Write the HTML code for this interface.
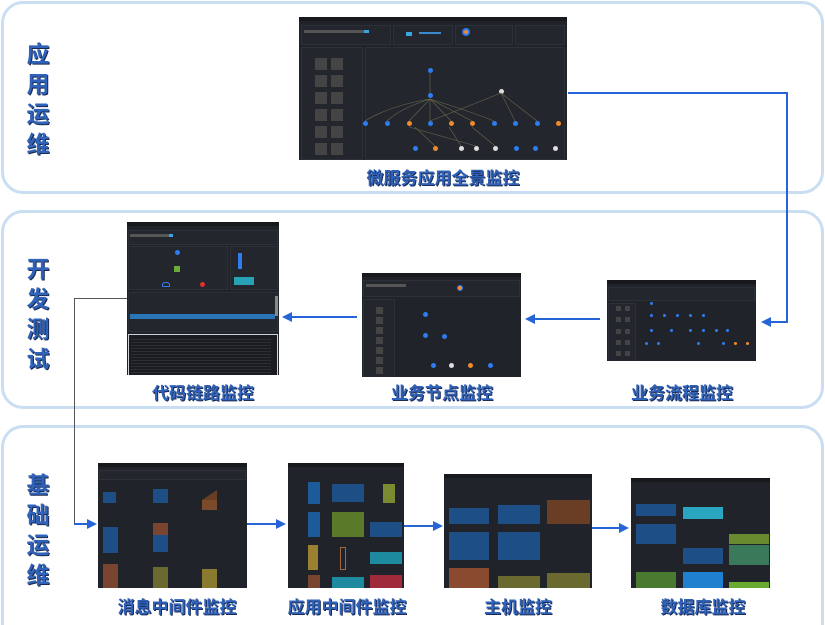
<!DOCTYPE html>
<html><head><meta charset="utf-8"><style>
*{margin:0;padding:0;box-sizing:border-box}
body{width:825px;height:625px;background:#fff;position:relative;overflow:hidden;font-family:"Liberation Sans","Noto Sans CJK SC",sans-serif}
.panel{position:absolute;border:3px solid #c9def2;border-radius:22px;background:#fff}
.vl{position:absolute;width:30px;font-size:23px;font-weight:bold;color:#2f62b8;line-height:30px;text-align:center;text-shadow:1px 1px 0 #1a2a50;font-family:"Noto Sans CJK SC",sans-serif}
.cap{position:absolute;font-size:17px;font-weight:bold;color:#2f62b8;text-shadow:1px 1px 0 #1b2b55;white-space:nowrap;transform:translateX(-50%);font-family:"Noto Sans CJK SC",sans-serif;line-height:20px}
.shot{position:absolute;background:#202329;overflow:hidden;border-top:4px solid #17191d}
.shot .p{position:absolute;border:1px solid #2c3038;background:#23262c}
.f{position:absolute}
.ln{position:absolute;background:#2565d8}
.ah{position:absolute;width:0;height:0;border-top:5px solid transparent;border-bottom:5px solid transparent}
.ahl{border-right:10px solid #2565d8}
.ahr{border-left:10px solid #2565d8}
.n{position:absolute;width:5px;height:5px;border-radius:50%;background:#2f7cf0}
.o{background:#f08a2c}.w{background:#ddd}
</style></head><body>

<div class="panel" style="left:1px;top:1px;width:823px;height:193px"></div>
<div class="panel" style="left:1px;top:210px;width:823px;height:199px"></div>
<div class="panel" style="left:1px;top:425px;width:823px;height:200px;border-bottom:none;border-radius:22px 22px 0 0"></div>

<div class="vl" style="left:23px;top:37px">应<br>用<br>运<br>维</div>
<div class="vl" style="left:23px;top:252px">开<br>发<br>测<br>试</div>
<div class="vl" style="left:23px;top:468px">基<br>础<br>运<br>维</div>

<div class="shot" style="left:299px;top:17px;width:268px;height:143px">
 <div class="p" style="left:2px;top:4px;width:90px;height:20px"></div>
 <div class="p" style="left:94px;top:4px;width:60px;height:20px"></div>
 <div class="p" style="left:156px;top:4px;width:58px;height:20px"></div>
 <div class="p" style="left:216px;top:4px;width:50px;height:20px"></div>
 <div class="f" style="left:5px;top:9px;width:60px;height:3px;background:#555"></div>
 <div class="f" style="left:65px;top:9px;width:5px;height:3px;background:#3aa6e0"></div>
 <div class="f" style="left:163px;top:7px;width:8px;height:8px;border-radius:50%;background:#f08a2c;border:2px solid #2f7cf0"></div>
 <div class="f" style="left:107px;top:11px;width:6px;height:4px;background:#3aa6e0"></div>
 <div class="f" style="left:120px;top:11px;width:22px;height:2px;background:#3a8ad0"></div>
 <div class="p" style="left:2px;top:26px;width:62px;height:113px"></div>
 <div class="p" style="left:66px;top:26px;width:200px;height:113px"></div>
 <div class="f" style="left:16px;top:37px;width:12px;height:12px;background:#444"></div><div class="f" style="left:32px;top:37px;width:12px;height:12px;background:#444"></div>
 <div class="f" style="left:16px;top:54px;width:12px;height:12px;background:#444"></div><div class="f" style="left:32px;top:54px;width:12px;height:12px;background:#444"></div>
 <div class="f" style="left:16px;top:71px;width:12px;height:12px;background:#444"></div><div class="f" style="left:32px;top:71px;width:12px;height:12px;background:#444"></div>
 <div class="f" style="left:16px;top:88px;width:12px;height:12px;background:#444"></div><div class="f" style="left:32px;top:88px;width:12px;height:12px;background:#444"></div>
 <div class="f" style="left:16px;top:105px;width:12px;height:12px;background:#444"></div><div class="f" style="left:32px;top:105px;width:12px;height:12px;background:#444"></div>
 <div class="f" style="left:16px;top:122px;width:12px;height:12px;background:#444"></div><div class="f" style="left:32px;top:122px;width:12px;height:12px;background:#444"></div>
 <div class="n" style="left:129px;top:47px"></div><div class="n" style="left:129px;top:72px"></div><div class="n w" style="left:200px;top:68px"></div>
 <div class="n" style="left:64px;top:100px"></div><div class="n" style="left:86px;top:100px"></div><div class="n o" style="left:108px;top:100px"></div><div class="n" style="left:129px;top:100px"></div><div class="n o" style="left:150px;top:100px"></div><div class="n o" style="left:171px;top:100px"></div><div class="n" style="left:193px;top:100px"></div><div class="n" style="left:214px;top:100px"></div><div class="n" style="left:236px;top:100px"></div><div class="n o" style="left:257px;top:100px"></div>
 <div class="n" style="left:114px;top:125px"></div><div class="n o" style="left:134px;top:125px"></div><div class="n w" style="left:160px;top:125px"></div><div class="n w" style="left:175px;top:125px"></div><div class="n w" style="left:194px;top:125px"></div><div class="n" style="left:215px;top:125px"></div><div class="n" style="left:234px;top:125px"></div><div class="n w" style="left:254px;top:125px"></div>
 <svg class="f" style="left:0;top:0" width="268" height="143"><g stroke="#6a6a50" stroke-width="0.6" fill="none"><path d="M131 52V72M131 78Q90 85 66 100M131 78Q100 88 88 100M131 78L110 100M131 78V100M131 78L152 100M131 78L173 100M131 78Q170 90 195 100M202 72Q170 85 131 100M202 72L216 100M202 72L238 100M116 106L136 125M150 106L162 125M173 106L196 125M110 106L177 125"/></g></svg>
</div>
<div class="cap" style="left:443px;top:167px">微服务应用全景监控</div>

<div class="shot" style="left:127px;top:222px;width:152px;height:153px">
 <div class="p" style="left:1px;top:4px;width:150px;height:15px"></div>
 <div class="f" style="left:3px;top:8px;width:40px;height:3px;background:#555"></div><div class="f" style="left:42px;top:8px;width:4px;height:3px;background:#3aa6e0"></div>
 <div class="p" style="left:1px;top:20px;width:100px;height:44px"></div>
 <div class="p" style="left:103px;top:20px;width:48px;height:44px"></div>
 <div class="f" style="left:111px;top:27px;width:4px;height:16px;background:#2f7cf0"></div>
 <div class="f" style="left:107px;top:51px;width:20px;height:8px;background:#27a3b5"></div>
 <div class="n" style="left:48px;top:24px"></div><div class="f" style="left:47px;top:40px;width:6px;height:6px;background:#6caa3a"></div>
 <div class="f" style="left:35px;top:56px;width:8px;height:5px;border:1px solid #2f7cf0;border-radius:50% 50% 0 0"></div><div class="n" style="left:73px;top:56px;background:#e03030"></div>
 <div class="p" style="left:1px;top:66px;width:150px;height:40px"></div>
 <div class="f" style="left:3px;top:88px;width:145px;height:5px;background:#2a8ad8;opacity:.8"></div>
 <div class="f" style="left:148px;top:70px;width:3px;height:20px;background:#888"></div>
 <div class="p" style="left:1px;top:108px;width:150px;height:45px;background:#1a1c20;border:1px solid #cfd3d8"></div>
 <div class="f" style="left:4px;top:113px;width:140px;height:38px;background:repeating-linear-gradient(#2b2e34 0 1px,#1a1c20 1px 3px)"></div>
</div>
<div class="cap" style="left:203px;top:382px">代码链路监控</div>

<div class="shot" style="left:362px;top:273px;width:159px;height:104px">
 <div class="p" style="left:1px;top:3px;width:157px;height:17px"></div>
 <div class="f" style="left:4px;top:7px;width:40px;height:3px;background:#555"></div><div class="f" style="left:95px;top:8px;width:6px;height:6px;border-radius:50%;background:#f08a2c;border:1px solid #2f7cf0"></div>
 <div class="p" style="left:1px;top:22px;width:32px;height:82px"></div>
 <div class="f" style="left:14px;top:30px;width:7px;height:7px;background:#444"></div><div class="f" style="left:14px;top:40px;width:7px;height:7px;background:#444"></div><div class="f" style="left:14px;top:50px;width:7px;height:7px;background:#444"></div><div class="f" style="left:14px;top:60px;width:7px;height:7px;background:#444"></div><div class="f" style="left:14px;top:70px;width:7px;height:7px;background:#444"></div><div class="f" style="left:14px;top:80px;width:7px;height:7px;background:#444"></div><div class="f" style="left:14px;top:90px;width:7px;height:7px;background:#444"></div>
 <div class="n" style="left:61px;top:35px"></div><div class="n" style="left:61px;top:56px"></div><div class="n" style="left:80px;top:57px"></div>
 <div class="n" style="left:69px;top:86px"></div><div class="n w" style="left:87px;top:86px"></div><div class="n o" style="left:106px;top:86px"></div><div class="n" style="left:126px;top:86px"></div>
</div>
<div class="cap" style="left:442px;top:382px">业务节点监控</div>

<div class="shot" style="left:607px;top:280px;width:149px;height:81px">
 <div class="p" style="left:1px;top:3px;width:147px;height:14px"></div>
 <div class="p" style="left:1px;top:19px;width:28px;height:62px"></div>
 <div class="f" style="left:9px;top:22px;width:5px;height:5px;background:#444"></div><div class="f" style="left:18px;top:22px;width:5px;height:5px;background:#444"></div>
 <div class="f" style="left:9px;top:33px;width:5px;height:5px;background:#444"></div><div class="f" style="left:18px;top:33px;width:5px;height:5px;background:#444"></div>
 <div class="f" style="left:9px;top:45px;width:5px;height:5px;background:#444"></div><div class="f" style="left:18px;top:45px;width:5px;height:5px;background:#444"></div>
 <div class="f" style="left:9px;top:56px;width:5px;height:5px;background:#444"></div><div class="f" style="left:18px;top:56px;width:5px;height:5px;background:#444"></div>
 <div class="f" style="left:9px;top:67px;width:5px;height:5px;background:#444"></div><div class="f" style="left:18px;top:67px;width:5px;height:5px;background:#444"></div>
 <div class="n" style="left:43px;top:18px;width:3px;height:3px"></div><div class="n" style="left:43px;top:30px;width:3px;height:3px"></div><div class="n" style="left:56px;top:30px;width:3px;height:3px"></div><div class="n" style="left:69px;top:30px;width:3px;height:3px"></div><div class="n" style="left:82px;top:30px;width:3px;height:3px"></div><div class="n" style="left:95px;top:30px;width:3px;height:3px"></div>
 <div class="n" style="left:43px;top:45px;width:3px;height:3px"></div><div class="n" style="left:63px;top:45px;width:3px;height:3px"></div><div class="n" style="left:82px;top:45px;width:3px;height:3px"></div><div class="n" style="left:95px;top:45px;width:3px;height:3px"></div><div class="n" style="left:108px;top:45px;width:3px;height:3px"></div><div class="n" style="left:119px;top:45px;width:3px;height:3px"></div>
 <div class="n" style="left:38px;top:58px;width:3px;height:3px"></div><div class="n" style="left:50px;top:58px;width:3px;height:3px"></div><div class="n" style="left:90px;top:58px;width:3px;height:3px"></div><div class="n" style="left:115px;top:58px;width:3px;height:3px"></div><div class="n o" style="left:127px;top:58px;width:3px;height:3px"></div><div class="n o" style="left:139px;top:58px;width:3px;height:3px"></div>
 <div class="f" style="left:33px;top:78px;width:114px;height:2px;background:#ccc"></div>
</div>
<div class="cap" style="left:682px;top:382px">业务流程监控</div>

<div class="shot" style="left:98px;top:463px;width:149px;height:125px">
 <div class="p" style="left:1px;top:3px;width:147px;height:10px"></div>
 <div class="f" style="left:5px;top:25px;width:13px;height:11px;background:#1d4f86"></div>
 <div class="f" style="left:55px;top:22px;width:15px;height:14px;background:#1d4f86"></div>
 <div class="f" style="left:104px;top:33px;width:15px;height:10px;background:#7a4a2a"></div><div class="f" style="left:104px;top:23px;width:15px;height:10px;background:#6a3e24;clip-path:polygon(0 100%,100% 0,100% 100%)"></div>
 <div class="f" style="left:5px;top:60px;width:15px;height:26px;background:#1d4f86"></div>
 <div class="f" style="left:55px;top:56px;width:15px;height:12px;background:#7a4530"></div><div class="f" style="left:55px;top:68px;width:15px;height:17px;background:#1d4f86"></div>
 <div class="f" style="left:5px;top:97px;width:15px;height:25px;background:#7a4530"></div>
 <div class="f" style="left:55px;top:100px;width:15px;height:22px;background:#6a6a30"></div>
 <div class="f" style="left:104px;top:102px;width:15px;height:20px;background:#8a7a30"></div>
</div>
<div class="cap" style="left:177px;top:596px">消息中间件监控</div>

<div class="shot" style="left:288px;top:463px;width:116px;height:125px">
 <div class="f" style="left:20px;top:15px;width:12px;height:22px;background:#1d5a9a"></div>
 <div class="f" style="left:44px;top:17px;width:32px;height:18px;background:#1d4f86"></div>
 <div class="f" style="left:95px;top:17px;width:12px;height:19px;background:#7a8a30"></div>
 <div class="f" style="left:20px;top:45px;width:12px;height:25px;background:#1d5a9a"></div>
 <div class="f" style="left:44px;top:45px;width:32px;height:25px;background:#5a7a2a"></div>
 <div class="f" style="left:82px;top:55px;width:32px;height:15px;background:#1d4f86"></div>
 <div class="f" style="left:20px;top:78px;width:10px;height:25px;background:#9a8030"></div>
 <div class="f" style="left:52px;top:80px;width:6px;height:23px;border:1px solid #a06a40"></div>
 <div class="f" style="left:82px;top:85px;width:32px;height:12px;background:#1e8aa0"></div>
 <div class="f" style="left:20px;top:108px;width:12px;height:15px;background:#7a4530"></div>
 <div class="f" style="left:44px;top:110px;width:32px;height:12px;background:#1e8aa0"></div>
 <div class="f" style="left:82px;top:108px;width:32px;height:14px;background:#a02a3a"></div>
</div>
<div class="cap" style="left:347px;top:596px">应用中间件监控</div>

<div class="shot" style="left:444px;top:474px;width:148px;height:114px">
 <div class="f" style="left:5px;top:30px;width:40px;height:16px;background:#1d4f86"></div>
 <div class="f" style="left:54px;top:27px;width:42px;height:19px;background:#1d4f86"></div>
 <div class="f" style="left:103px;top:22px;width:43px;height:24px;background:#6a3e24"></div>
 <div class="f" style="left:5px;top:54px;width:40px;height:28px;background:#1d4f86"></div>
 <div class="f" style="left:54px;top:54px;width:42px;height:28px;background:#1d4f86"></div>
 <div class="f" style="left:5px;top:90px;width:40px;height:22px;background:#8a4a30"></div>
 <div class="f" style="left:54px;top:98px;width:42px;height:14px;background:#6a6a30"></div>
 <div class="f" style="left:103px;top:95px;width:43px;height:17px;background:#6a6a30"></div>
</div>
<div class="cap" style="left:518px;top:596px">主机监控</div>

<div class="shot" style="left:631px;top:478px;width:139px;height:110px">
 <div class="f" style="left:5px;top:22px;width:40px;height:12px;background:#1d4f86"></div>
 <div class="f" style="left:52px;top:25px;width:40px;height:12px;background:#2aa6c0"></div>
 <div class="f" style="left:5px;top:42px;width:40px;height:20px;background:#1d4f86"></div>
 <div class="f" style="left:98px;top:52px;width:40px;height:10px;background:#6a8a30"></div>
 <div class="f" style="left:52px;top:66px;width:40px;height:16px;background:#1d4f86"></div>
 <div class="f" style="left:98px;top:63px;width:40px;height:20px;background:#3a7a5a"></div>
 <div class="f" style="left:5px;top:90px;width:40px;height:18px;background:#4a7a30"></div>
 <div class="f" style="left:52px;top:90px;width:40px;height:18px;background:#2080d0"></div>
 <div class="f" style="left:98px;top:100px;width:40px;height:8px;background:#6aaa30"></div>
</div>
<div class="cap" style="left:703px;top:596px">数据库监控</div>

<div class="ln" style="left:568px;top:92px;width:220px;height:2px"></div>
<div class="ln" style="left:786px;top:92px;width:2px;height:231px"></div>
<div class="ln" style="left:770px;top:321px;width:18px;height:2px"></div>
<div class="ah ahl" style="left:761px;top:317px"></div>

<div class="ln" style="left:535px;top:318px;width:65px;height:2px"></div>
<div class="ah ahl" style="left:525px;top:314px"></div>
<div class="ln" style="left:292px;top:316px;width:65px;height:2px"></div>
<div class="ah ahl" style="left:282px;top:312px"></div>

<div class="ln" style="left:74px;top:298px;width:53px;height:1px;background:#555"></div>
<div class="ln" style="left:74px;top:298px;width:1px;height:226px;background:#555"></div>
<div class="ln" style="left:74px;top:523px;width:14px;height:2px"></div>
<div class="ah ahr" style="left:87px;top:519px"></div>

<div class="ln" style="left:247px;top:523px;width:30px;height:2px"></div>
<div class="ah ahr" style="left:276px;top:519px"></div>
<div class="ln" style="left:404px;top:525px;width:30px;height:2px"></div>
<div class="ah ahr" style="left:433px;top:521px"></div>
<div class="ln" style="left:592px;top:527px;width:28px;height:2px"></div>
<div class="ah ahr" style="left:619px;top:523px"></div>
</body></html>
